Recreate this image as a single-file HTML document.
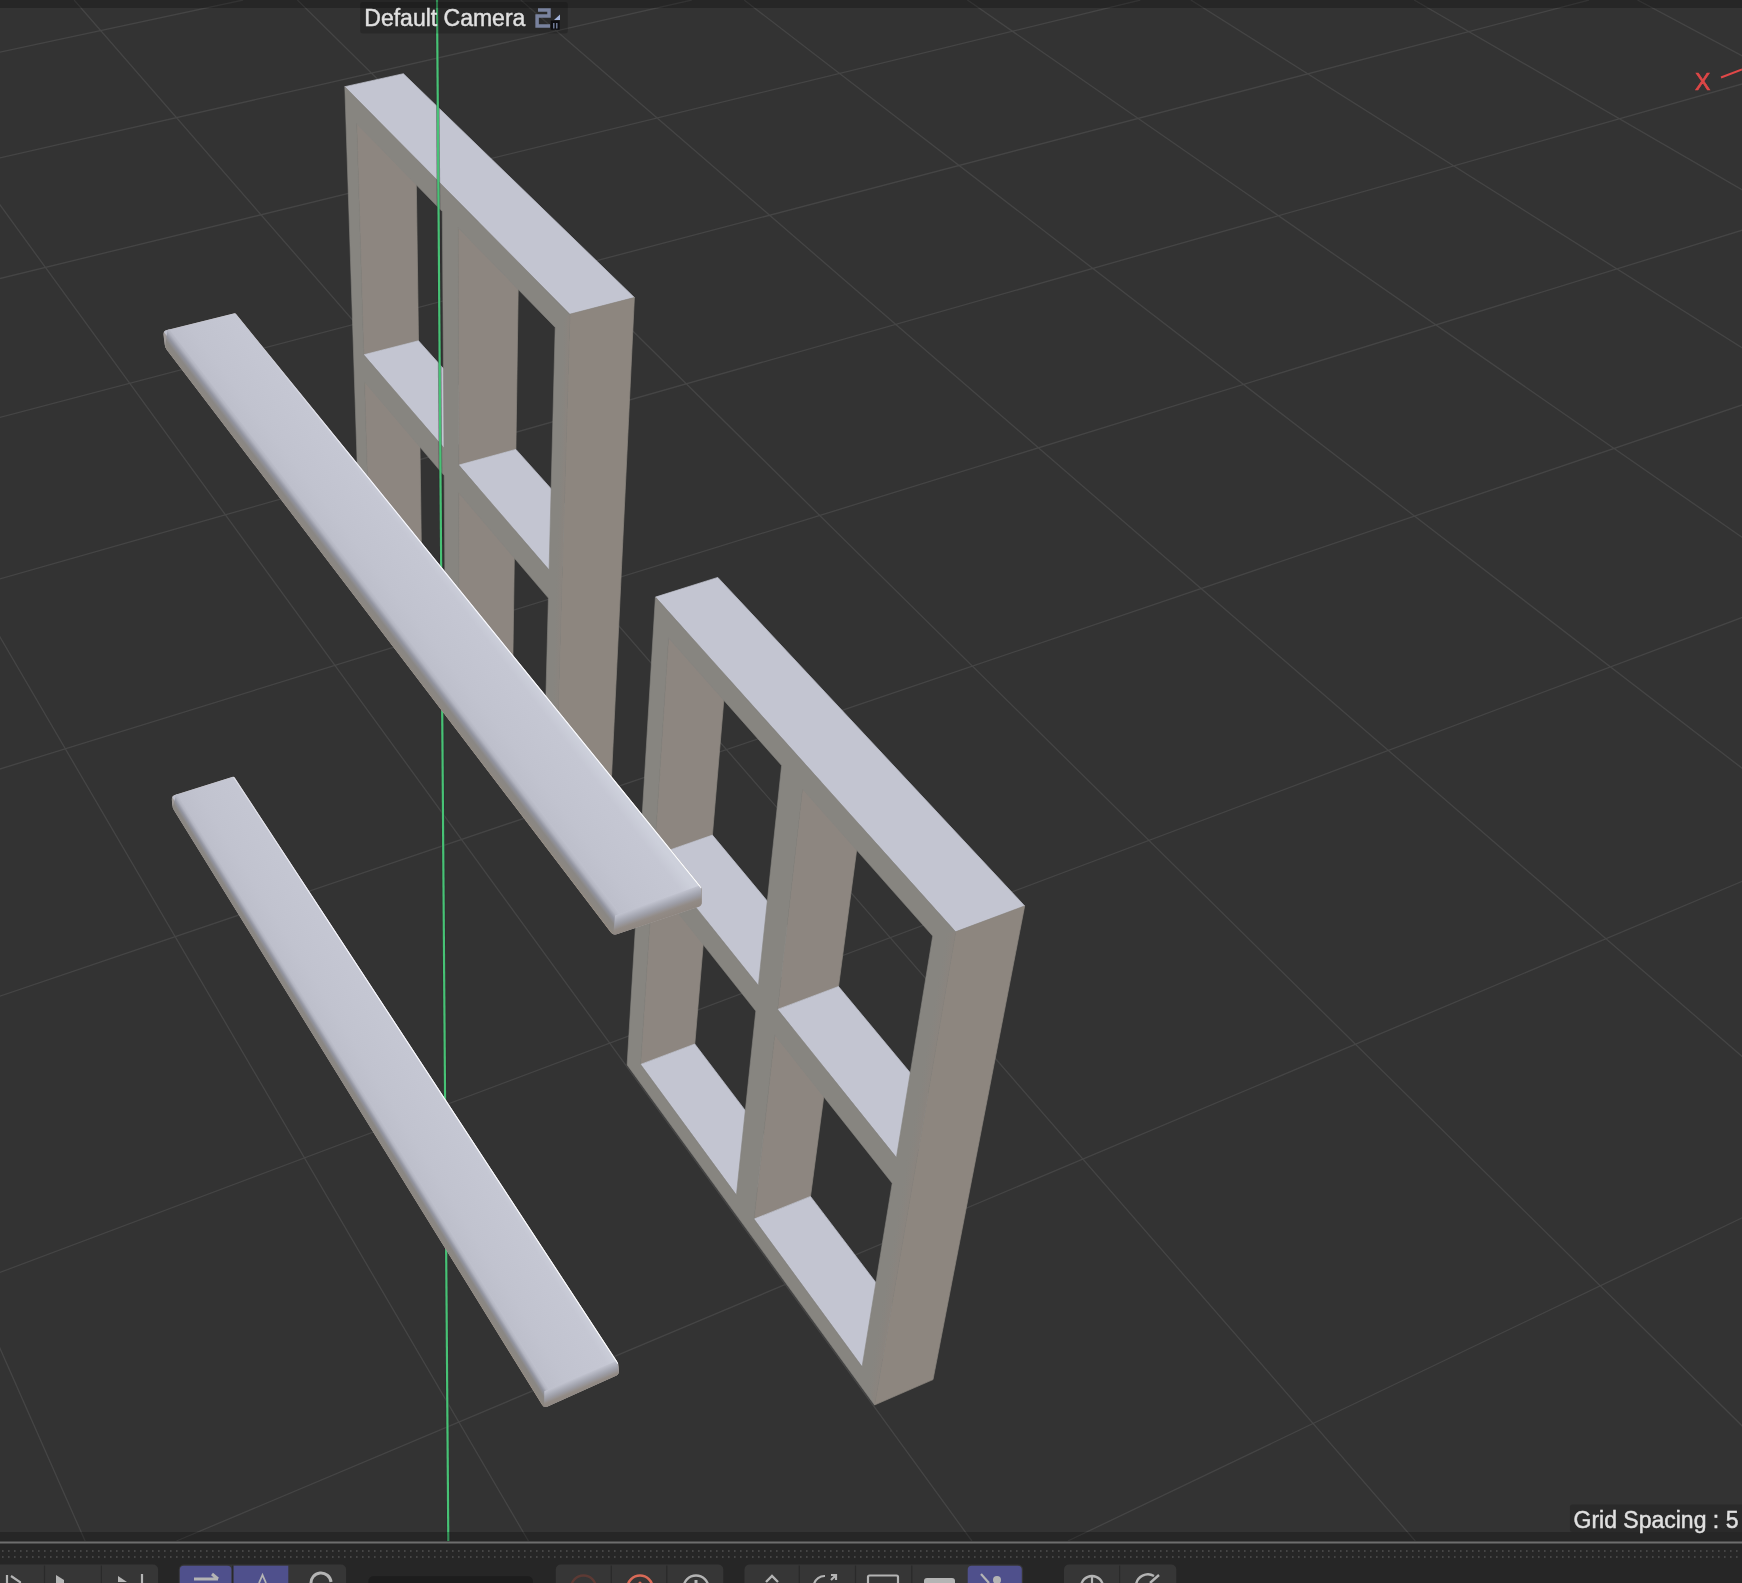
<!DOCTYPE html>
<html><head><meta charset="utf-8">
<style>
html,body{margin:0;padding:0;background:#333333;width:1742px;height:1583px;overflow:hidden}
svg{position:absolute;left:0;top:0;display:block}
.lbl{position:absolute;font-family:"Liberation Sans",sans-serif;color:#dedede;white-space:nowrap}
</style></head><body>
<svg width="1742" height="1583" viewBox="0 0 1742 1583">
<defs>
<clipPath id="vp"><rect x="0" y="0" width="1742" height="1541"/></clipPath>
<clipPath id="pk1clip"><path d="M163.48 334.97Q163.00 331.00 166.88 330.03L233.36 313.48Q235.30 313.00 236.56 314.55L700.01 885.47Q701.90 887.80 701.90 890.80L701.90 901.70Q701.90 905.70 698.11 906.97L616.89 934.23Q613.10 935.50 610.68 932.32L166.82 349.89Q165.00 347.50 164.64 344.52Z"/></clipPath>
<linearGradient id="pk1top" gradientUnits="userSpaceOnUse" x1="616.1" y1="918.4" x2="679.4" y2="869.5"><stop offset="0" stop-color="#bcbeca"/><stop offset="0.3" stop-color="#c1c3cf"/><stop offset="0.85" stop-color="#c5c7d3"/><stop offset="1" stop-color="#cdd0db"/></linearGradient>
<linearGradient id="pk1side" gradientUnits="userSpaceOnUse" x1="620.9" y1="914.7" x2="605.9" y2="926.2"><stop offset="0" stop-color="#c0c2ce"/><stop offset="0.22" stop-color="#b3b5c1"/><stop offset="0.42" stop-color="#9294a0"/><stop offset="0.62" stop-color="#8a8784"/><stop offset="0.9" stop-color="#8c8781"/><stop offset="1" stop-color="#958b80"/></linearGradient>
<linearGradient id="pk1end" gradientUnits="userSpaceOnUse" x1="658.0" y1="900.3" x2="664.1" y2="917.3"><stop offset="0" stop-color="#c0c2ce"/><stop offset="0.3" stop-color="#a8aab5"/><stop offset="0.5" stop-color="#9b9ba3"/><stop offset="0.75" stop-color="#928b86"/><stop offset="1" stop-color="#8f8781"/></linearGradient>
<linearGradient id="pk1hl" gradientUnits="userSpaceOnUse" x1="258.6" y1="341.7" x2="701.9" y2="887.8"><stop offset="0" stop-color="#f4f4fb" stop-opacity="0.0"/><stop offset="0.25" stop-color="#f8f8ff" stop-opacity="1"/><stop offset="1" stop-color="#ffffff"/></linearGradient><clipPath id="pk2clip"><path d="M171.83 799.99Q171.50 796.00 175.31 794.80L231.99 776.90Q233.90 776.30 235.00 777.97L616.86 1360.89Q618.50 1363.40 618.69 1366.39L618.95 1370.41Q619.20 1374.40 615.55 1376.04L547.75 1406.56Q544.10 1408.20 541.99 1404.80L174.08 810.55Q172.50 808.00 172.25 805.01Z"/></clipPath>
<linearGradient id="pk2top" gradientUnits="userSpaceOnUse" x1="545.5" y1="1394.0" x2="613.3" y2="1351.6"><stop offset="0" stop-color="#bcbeca"/><stop offset="0.3" stop-color="#c1c3cf"/><stop offset="0.85" stop-color="#c5c7d3"/><stop offset="1" stop-color="#cdd0db"/></linearGradient>
<linearGradient id="pk2side" gradientUnits="userSpaceOnUse" x1="550.6" y1="1390.8" x2="538.1" y2="1398.6"><stop offset="0" stop-color="#c0c2ce"/><stop offset="0.22" stop-color="#b3b5c1"/><stop offset="0.42" stop-color="#9294a0"/><stop offset="0.62" stop-color="#8a8784"/><stop offset="0.9" stop-color="#8c8781"/><stop offset="1" stop-color="#958b80"/></linearGradient>
<linearGradient id="pk2end" gradientUnits="userSpaceOnUse" x1="580.8" y1="1375.9" x2="586.9" y2="1390.3"><stop offset="0" stop-color="#c0c2ce"/><stop offset="0.3" stop-color="#a8aab5"/><stop offset="0.5" stop-color="#9b9ba3"/><stop offset="0.75" stop-color="#928b86"/><stop offset="1" stop-color="#8f8781"/></linearGradient>
<linearGradient id="pk2hl" gradientUnits="userSpaceOnUse" x1="233.9" y1="776.3" x2="618.5" y2="1363.4"><stop offset="0" stop-color="#f4f4fb" stop-opacity="0.5"/><stop offset="0.25" stop-color="#f8f8ff" stop-opacity="1"/><stop offset="1" stop-color="#ffffff"/></linearGradient>
</defs>
<rect x="0" y="0" width="1742" height="1583" fill="#333333"/>
<g>
<path d="M-2.0 1343.9L85.1 1541.0M-2.0 633.6L528.4 1541.0M-2.0 202.2L971.9 1541.0M74.1 0.0L1415.3 1541.0M297.4 0.0L1744.0 1427.7M520.7 0.0L1744.0 1058.1M744.1 0.0L1744.0 769.7M967.4 0.0L1744.0 538.6M1190.8 0.0L1744.0 349.1M1414.1 0.0L1744.0 190.9M1637.5 0.0L1744.0 56.9M-2.0 52.5L243.1 0.0M-2.0 158.4L691.7 0.0M-2.0 279.0L1140.3 0.0M-2.0 417.9L1589.0 0.0M-2.0 579.4L1744.0 83.4M-2.0 769.6L1744.0 229.6M-2.0 996.8L1744.0 404.3M-2.0 1273.1L1744.0 616.7M176.5 1541.0L1744.0 880.5M1067.9 1541.0L1744.0 1216.9" stroke="#454545" stroke-width="1.3" fill="none"/>
<polygon points="364.5,381.9 418.9,367.8 421.6,564.8 370.4,579.4" fill="#8d8680" stroke="#8d8680" stroke-width="0.7" stroke-linejoin="round" />
<polygon points="370.4,579.4 421.6,564.8 498.5,660.3 445.6,676.3" fill="#c3c5d1" stroke="#c3c5d1" stroke-width="0.7" stroke-linejoin="round" />
<polygon points="458.7,492.8 515.5,477.0 512.6,677.8 459.3,694.0" fill="#8d8680" stroke="#8d8680" stroke-width="0.7" stroke-linejoin="round" />
<polygon points="459.3,694.0 512.6,677.8 598.4,784.4 543.2,802.2" fill="#c3c5d1" stroke="#c3c5d1" stroke-width="0.7" stroke-linejoin="round" />
<polygon points="356.7,123.7 415.3,110.5 418.5,340.8 363.7,354.8" fill="#8d8680" stroke="#8d8680" stroke-width="0.7" stroke-linejoin="round" />
<polygon points="363.7,354.8 418.5,340.8 500.8,432.6 444.0,448.0" fill="#c3c5d1" stroke="#c3c5d1" stroke-width="0.7" stroke-linejoin="round" />
<polygon points="458.1,227.8 519.3,212.9 515.9,449.4 458.7,465.1" fill="#8d8680" stroke="#8d8680" stroke-width="0.7" stroke-linejoin="round" />
<polygon points="458.7,465.1 515.9,449.4 608.4,552.6 549.1,569.9" fill="#c3c5d1" stroke="#c3c5d1" stroke-width="0.7" stroke-linejoin="round" />
<polygon points="344.8,86.7 403.4,73.7 634.4,297.5 569.8,314.2" fill="#c3c5d1" stroke="#c3c5d1" stroke-width="0.7" stroke-linejoin="round" />
<polygon points="569.8,314.2 634.4,297.5 609.5,818.9 554.4,836.9" fill="#8d867f" stroke="#8d867f" stroke-width="0.7" stroke-linejoin="round" />
<path d="M344.8,86.7 L569.8,314.2 L554.4,836.9 L361.2,585.7ZM364.5,381.9 L444.2,475.6 L445.6,676.3 L370.4,579.4ZM458.7,492.8 L548.4,598.1 L543.2,802.2 L459.3,694.0ZM356.7,123.7 L442.3,211.6 L444.0,448.0 L363.7,354.8ZM458.1,227.8 L555.2,327.4 L549.1,569.9 L458.7,465.1Z" fill="#878580" fill-rule="evenodd" stroke="#878580" stroke-width="0.6" stroke-linejoin="round"/>
<linearGradient id="rs569" gradientUnits="userSpaceOnUse" x1="554.7" y1="582.0" x2="561.9" y2="582.2"><stop offset="0" stop-color="#878580" stop-opacity="0"/><stop offset="1" stop-color="#8b847e" stop-opacity="0.9"/></linearGradient>
<polygon points="555.2,327.4 569.8,314.2 554.4,836.9 543.2,802.2" fill="url(#rs569)" />
<polygon points="652.6,880.8 710.3,860.4 694.8,1044.0 640.6,1064.4" fill="#8d8680" stroke="#8d8680" stroke-width="0.7" stroke-linejoin="round" />
<polygon points="640.6,1064.4 694.8,1044.0 792.6,1172.8 736.4,1195.1" fill="#c3c5d1" stroke="#c3c5d1" stroke-width="0.7" stroke-linejoin="round" />
<polygon points="774.7,1034.9 835.0,1012.1 810.5,1196.4 754.0,1219.1" fill="#8d8680" stroke="#8d8680" stroke-width="0.7" stroke-linejoin="round" />
<polygon points="754.0,1219.1 810.5,1196.4 920.8,1341.7 862.1,1366.7" fill="#c3c5d1" stroke="#c3c5d1" stroke-width="0.7" stroke-linejoin="round" />
<polygon points="668.5,637.9 730.8,617.8 712.4,835.1 654.3,855.4" fill="#8d8680" stroke="#8d8680" stroke-width="0.7" stroke-linejoin="round" />
<polygon points="654.3,855.4 712.4,835.1 818.9,963.0 758.4,985.4" fill="#c3c5d1" stroke="#c3c5d1" stroke-width="0.7" stroke-linejoin="round" />
<polygon points="802.5,789.1 867.8,766.4 838.5,986.5 777.6,1009.4" fill="#8d8680" stroke="#8d8680" stroke-width="0.7" stroke-linejoin="round" />
<polygon points="777.6,1009.4 838.5,986.5 959.7,1132.2 896.4,1157.6" fill="#c3c5d1" stroke="#c3c5d1" stroke-width="0.7" stroke-linejoin="round" />
<polygon points="655.4,597.1 717.8,577.4 1024.7,905.9 955.6,931.8" fill="#c3c5d1" stroke="#c3c5d1" stroke-width="0.7" stroke-linejoin="round" />
<polygon points="955.6,931.8 1024.7,905.9 933.0,1379.6 874.5,1405.0" fill="#8d867f" stroke="#8d867f" stroke-width="0.7" stroke-linejoin="round" />
<path d="M655.4,597.1 L955.6,931.8 L874.5,1405.0 L627.1,1064.9ZM652.6,880.8 L755.8,1011.0 L736.4,1195.1 L640.6,1064.4ZM774.7,1034.9 L892.2,1183.2 L862.1,1366.7 L754.0,1219.1ZM668.5,637.9 L781.6,765.5 L758.4,985.4 L654.3,855.4ZM802.5,789.1 L932.7,936.0 L896.4,1157.6 L777.6,1009.4Z" fill="#878580" fill-rule="evenodd" stroke="#878580" stroke-width="0.6" stroke-linejoin="round"/>
<linearGradient id="rs955" gradientUnits="userSpaceOnUse" x1="903.5" y1="1169.9" x2="914.5" y2="1171.8"><stop offset="0" stop-color="#878580" stop-opacity="0"/><stop offset="1" stop-color="#8b847e" stop-opacity="0.9"/></linearGradient>
<polygon points="932.7,936.0 955.6,931.8 874.5,1405.0 862.1,1366.7" fill="url(#rs955)" />
<path d="M437 0L448.3 1541" stroke="#2b2228" stroke-width="3.6" stroke-opacity="0.45" fill="none"/>
<path d="M437 0L448.3 1541" stroke="#47c275" stroke-width="2.2" fill="none"/>
<g clip-path="url(#pk2clip)">
<polygon points="171.5,796.0 233.9,776.3 618.5,1363.4 619.2,1374.4 544.1,1408.2 172.5,808.0" fill="#9f9a98" stroke="#9f9a98" stroke-width="2"/>
<polygon points="171.5,796.0 233.9,776.3 618.5,1363.4 545.5,1394.0" fill="url(#pk2top)" />
<polygon points="176.6,792.8 550.6,1390.8 544.1,1408.2 172.5,808.0" fill="url(#pk2side)"/>
<polygon points="544.3,1391.2 617.3,1360.6 619.2,1374.4 544.1,1408.2" fill="url(#pk2end)"/>
<path d="M233.9,776.3L618.5,1363.4" stroke="url(#pk2hl)" stroke-width="2.2" fill="none"/>
</g>
<g clip-path="url(#pk1clip)">
<polygon points="163.0,331.0 235.3,313.0 701.9,887.8 701.9,905.7 613.1,935.5 165.0,347.5" fill="#9f9a98" stroke="#9f9a98" stroke-width="2"/>
<polygon points="163.0,331.0 235.3,313.0 701.9,887.8 616.1,918.4" fill="url(#pk1top)" />
<polygon points="167.8,327.3 620.9,914.7 613.1,935.5 165.0,347.5" fill="url(#pk1side)"/>
<polygon points="615.1,915.6 700.9,885.0 701.9,905.7 613.1,935.5" fill="url(#pk1end)"/>
<path d="M258.6,341.7L701.9,887.8" stroke="url(#pk1hl)" stroke-width="2.2" fill="none"/>
</g>
</g>
<rect x="0" y="1532" width="1742" height="9.5" fill="#000" fill-opacity="0.255"/>
<!-- top bar -->
<rect x="0" y="0" width="1742" height="8" fill="#000" fill-opacity="0.255"/>
<!-- axis X -->
<path d="M1721 77.5L1742 69.5" stroke="#e04848" stroke-width="2" fill="none"/>
<!-- camera label -->
<rect x="360.2" y="2" width="207.6" height="31.6" rx="2.5" fill="#000" fill-opacity="0.18"/>
<!-- grid spacing label -->
<rect x="1569.9" y="1504.4" width="180" height="27.7" rx="2.5" fill="#000" fill-opacity="0.17"/>
<!-- bottom toolbar -->
<rect x="0" y="1541" width="1742" height="42" fill="#262626"/>
<rect x="0" y="1541.5" width="1742" height="2" fill="#6e6e6e"/>
<path d="M2 1551H1742M2 1557H1742" stroke="#505050" stroke-width="1.6" stroke-dasharray="1.6 4.4" fill="none"/>
<rect x="-10" y="1564.5" width="168.1" height="40" rx="5" fill="#363636"/>
<rect x="43.9" y="1565.5" width="1.2" height="30" fill="#2a2a2a"/>
<rect x="100.8" y="1565.5" width="1.2" height="30" fill="#2a2a2a"/>
<rect x="178.8" y="1564.5" width="167.3" height="40" rx="5" fill="#363636"/>
<rect x="179.8" y="1565.7" width="51.6" height="30" rx="4" fill="#4f508c"/>
<rect x="233.5" y="1565.7" width="54.8" height="30" rx="0" fill="#4f508c"/>
<rect x="232.0" y="1565.5" width="1.2" height="30" fill="#2a2a2a"/>
<rect x="368.4" y="1576.2" width="164.5" height="20" rx="5" fill="#1d1d1d"/>
<rect x="555.8" y="1564.5" width="167.5" height="40" rx="5" fill="#363636"/>
<rect x="610.7" y="1565.5" width="1.2" height="30" fill="#2a2a2a"/>
<rect x="666.2" y="1565.5" width="1.2" height="30" fill="#2a2a2a"/>
<rect x="744.5" y="1564.5" width="278.6" height="40" rx="5" fill="#363636"/>
<rect x="798.7" y="1565.5" width="1.2" height="30" fill="#2a2a2a"/>
<rect x="854.9" y="1565.5" width="1.2" height="30" fill="#2a2a2a"/>
<rect x="911.2" y="1565.5" width="1.2" height="30" fill="#2a2a2a"/>
<rect x="967.7" y="1565.8" width="54.1" height="30" rx="4" fill="#4f508c"/>
<rect x="1064" y="1564.5" width="112.29999999999995" height="40" rx="5" fill="#363636"/>
<rect x="1119.0" y="1565.5" width="1.2" height="30" fill="#2a2a2a"/>
<path d="M7 1575v10M11 1576l9 6v2" stroke="#b4b4b4" stroke-width="2.2" fill="none"/>
<path d="M56 1575l8 5v3h-8z" fill="#b4b4b4"/>
<path d="M118 1576l9 6h-9zM142 1574v9" stroke="#b4b4b4" stroke-width="0" fill="#b4b4b4"/><path d="M142 1574v10" stroke="#b4b4b4" stroke-width="2.2"/>
<path d="M194 1579h24M212 1574l6 5" stroke="#b4b4b4" stroke-width="3" fill="none"/>
<path d="M259 1583l3.5-8l3.5 8" stroke="#b4b4b4" stroke-width="1.8" fill="none"/>
<path d="M311 1584a10 10 0 0 1 20-2" stroke="#b4b4b4" stroke-width="3" fill="none"/>
<circle cx="583.5" cy="1588" r="12.5" stroke="#5c3a34" stroke-width="2.4" fill="none"/>
<circle cx="640" cy="1588" r="12.5" stroke="#d96a57" stroke-width="2.6" fill="none"/>
<circle cx="640" cy="1583" r="1.6" fill="#d96a57"/>
<circle cx="696" cy="1588" r="12.5" stroke="#b4b4b4" stroke-width="2.4" fill="none"/>
<rect x="694.5" y="1580" width="3" height="4" fill="#b4b4b4"/>
<path d="M766 1582l6-6l6 6" stroke="#b4b4b4" stroke-width="2.4" fill="none"/>
<path d="M814 1584a11 11 0 0 1 11-8M831 1575h5v5M836 1575l-5 5" stroke="#b4b4b4" stroke-width="2.2" fill="none"/>
<rect x="868" y="1575.5" width="30" height="14" rx="1.5" stroke="#b4b4b4" stroke-width="2.2" fill="none"/>
<rect x="924" y="1578" width="31" height="12" rx="3" fill="#b4b4b4"/>
<path d="M981 1574l8 9" stroke="#b4b4b4" stroke-width="2.2"/><circle cx="997" cy="1580" r="4" fill="#b4b4b4"/>
<circle cx="1092" cy="1587" r="11" stroke="#b4b4b4" stroke-width="2.4" fill="none"/><path d="M1092 1576v8" stroke="#b4b4b4" stroke-width="2.2"/>
<path d="M1136 1585a12 12 0 0 1 18-9M1150 1583l9-8" stroke="#b4b4b4" stroke-width="2.4" fill="none"/>
<g opacity="0.995">
<text x="364.3" y="25.9" font-family="Liberation Sans" font-size="23" fill="#e2e2e2" stroke="#e2e2e2" stroke-width="0.45" style="filter:grayscale(1)">Default Camera</text>
<text x="1573.5" y="1527.9" font-family="Liberation Sans" font-size="23" fill="#e2e2e2" stroke="#e2e2e2" stroke-width="0.45" style="filter:grayscale(1)">Grid Spacing : 5</text>
<text x="1695" y="90.3" font-family="Liberation Sans" font-size="23" fill="#e04848" stroke="#e04848" stroke-width="0.7">X</text>
<path d="M538 9.9H549V15.9H537.1V26H550" stroke="#7a84a0" stroke-width="3.5" fill="none" stroke-linejoin="miter"/>
<path d="M554 20l6-5.5v5.5z" fill="#a6b6dc"/><rect x="550.8" y="20.5" width="8.8" height="9.2" fill="#0e0e10"/><path d="M553.8 23v5.5M556.8 23v5.5" stroke="#7f8cab" stroke-width="1.3"/>
</g>
</svg>

</body></html>
